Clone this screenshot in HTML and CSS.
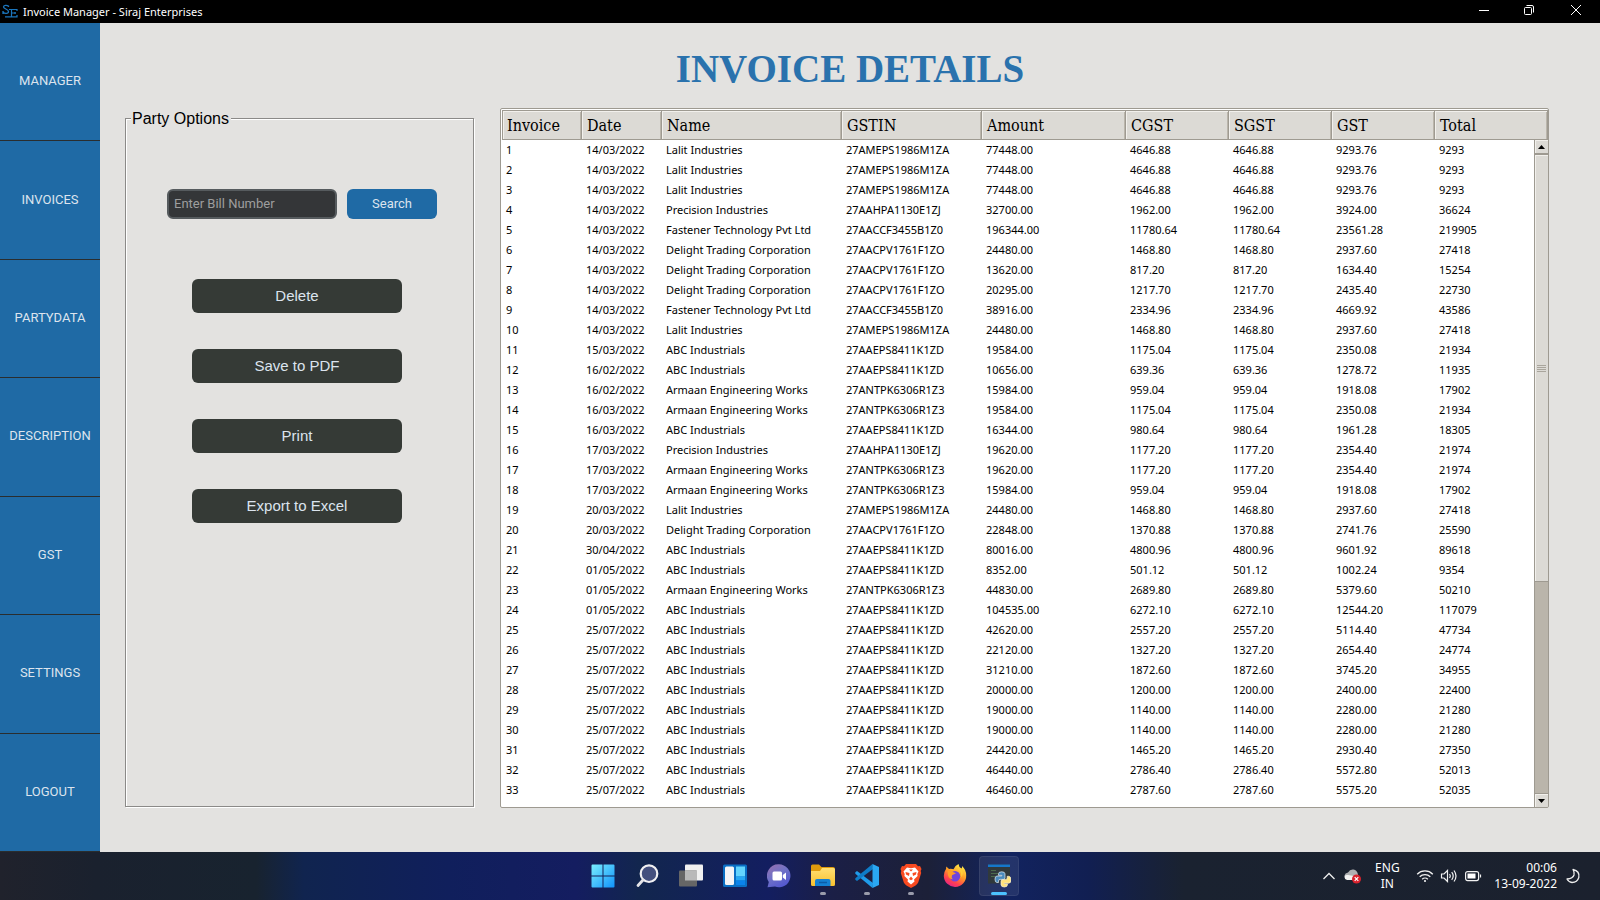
FILE: index.html
```html
<!DOCTYPE html>
<html lang="en">
<head>
<meta charset="utf-8">
<title>Invoice Manager - Siraj Enterprises</title>
<link rel="stylesheet" href="styles.css">
</head>
<body>
<header class="titlebar">
  <svg class="app-logo" viewBox="0 0 16 16" width="16" height="16" fill="none" stroke="#1b76bd" stroke-width="1.3"><path d="M6.500 3V1.500M6.500 2.200C5 .8 1.500 1 1.500 3S6.500 5 6.500 7.500 2.500 10 1 8M1 7v3"/><path d="M7 5.500h8V7M9.500 5.500v7M9.500 9H14M13 8v2M7 12.800h8V11M3 12.800h4" stroke-width="1.200"/></svg>
  <span class="app-title">Invoice Manager - Siraj Enterprises</span>
  <div class="window-controls">
    <button aria-label="Minimize"><svg viewBox="0 0 12 12" width="12" height="12"><path d="M1 6.500h10" stroke="#fff"/></svg></button>
    <button aria-label="Restore"><svg viewBox="0 0 12 12" width="12" height="12" fill="none" stroke="#fff"><rect x="1.500" y="3.500" width="7" height="7" rx="1"/><path d="M3.500 1.500H9a1.500 1.500 0 0 1 1.500 1.500v5.500"/></svg></button>
    <button aria-label="Close"><svg viewBox="0 0 12 12" width="12" height="12"><path d="M1 1l10 10M11 1L1 11" stroke="#fff"/></svg></button>
  </div>
</header>
<div class="workspace">
  <nav class="sidebar">
    <button>MANAGER</button>
    <button>INVOICES</button>
    <button>PARTYDATA</button>
    <button>DESCRIPTION</button>
    <button>GST</button>
    <button>SETTINGS</button>
    <button>LOGOUT</button>
  </nav>
  <main class="content">
    <h1 class="page-title">INVOICE DETAILS</h1>
    <div class="panels">
      <fieldset class="options">
        <legend>Party Options</legend>
        <form class="search">
          <input type="text" class="search-box" placeholder="Enter Bill Number" aria-label="Bill number">
          <button type="button" class="search-button">Search</button>
        </form>
        <div class="actions">
          <button>Delete</button>
          <button>Save to PDF</button>
          <button>Print</button>
          <button>Export to Excel</button>
        </div>
      </fieldset>
      <section class="ledger">
        <table class="invoices">
          <colgroup><col class="w-short"><col class="w-short"><col class="w-name"><col class="w-gstin"><col class="w-amount"><col class="w-tax"><col class="w-tax"><col class="w-tax"><col class="w-total"></colgroup>
          <thead><tr><th>Invoice</th><th>Date</th><th>Name</th><th>GSTIN</th><th>Amount</th><th>CGST</th><th>SGST</th><th>GST</th><th>Total</th></tr></thead>
          <tbody id="rows"></tbody>
        </table>
        <div class="scrollbar">
          <button class="scroll-step" aria-label="Scroll up"><svg viewBox="0 0 7 4" width="7" height="4"><path d="M0 4L3.500 0 7 4z"/></svg></button>
          <div class="scroll-track"><div class="scroll-thumb"><i></i><i></i><i></i><i></i></div></div>
          <button class="scroll-step" aria-label="Scroll down"><svg viewBox="0 0 7 4" width="7" height="4"><path d="M0 0h7L3.500 4z"/></svg></button>
        </div>
      </section>
    </div>
  </main>
</div>
<footer class="taskbar">
  <div class="pinned">
    <button aria-label="Start"><svg viewBox="0 0 24 24" width="24" height="24"><defs><linearGradient id="win" x1="0" y1="0" x2="24" y2="24" gradientUnits="userSpaceOnUse"><stop stop-color="#7cf0ff"/><stop offset="1" stop-color="#0e90fa"/></linearGradient></defs><path fill="url(#win)" d="M.5 1.500Q.5.5 1.500.5H11.500V11.500H.5zM12.500.5H22.500q1 0 1 1V11.500H12.500zM.5 12.500H11.500V23.500H1.500q-1 0-1-1zM12.500 12.500H23.500V22.500q0 1-1 1H12.500z"/></svg></button>
    <button aria-label="Search"><svg viewBox="0 0 24 24" width="24" height="24"><circle cx="14" cy="9.700" r="8.300" fill="#44507e" stroke="#f0f0f2" stroke-width="2.200"/><path d="M8 16l-5 5.500" stroke="#e4e4e8" stroke-width="2.800" stroke-linecap="round"/></svg></button>
    <button aria-label="Task view"><svg viewBox="0 0 24 24" width="24" height="24"><rect x="6" y=".5" width="18" height="16" rx="1" fill="#f1f1f1"/><rect x="0" y="6.500" width="18" height="16" rx="1" fill="#666"/><path d="M6 6.500h12v10H6z" fill="#b9b9b9"/></svg></button>
    <button aria-label="Widgets"><svg viewBox="0 0 24 24" width="24" height="24"><rect y=".5" width="24" height="22.500" rx="1.500" fill="#0a6fc4"/><rect x="2" y="2.500" width="9" height="18.500" rx="1.500" fill="#f4f4f6"/><path d="M13 2.500h9v10h-9z" fill="#63d4fd"/><path d="M13 12.500h9v4h-9z" fill="#26a8f4"/><path d="M13 16.500h9V21h-9z" fill="#0b83ea"/></svg></button>
    <button aria-label="Chat"><svg viewBox="0 0 24 24" width="24" height="24"><defs><linearGradient id="chat" x1="0" y1="0" x2=".6" y2="1"><stop stop-color="#9a6fae"/><stop offset=".5" stop-color="#7072c6"/><stop offset="1" stop-color="#5459d0"/></linearGradient></defs><path d="M12 .3a11.500 11.500 0 1 1-4 22.300L.5 23.200 1.800 18A11.500 11.500 0 0 1 12 .3z" fill="url(#chat)"/><rect x="5.500" y="7.500" width="9.500" height="9" rx="1.500" fill="#fff"/><path d="M15.800 11l3.200-2.500v7.500l-3.200-2.500z" fill="#fff"/></svg></button>
    <button class="running" aria-label="File Explorer"><svg viewBox="0 0 24 24" width="24" height="24"><defs><linearGradient id="fold" x1="0" y1="0" x2="0" y2="1"><stop stop-color="#ffdf73"/><stop offset="1" stop-color="#f8c02e"/></linearGradient></defs><path d="M0 2q0-1.500 1.500-1.500H8l2.500 2.500H22q2 0 2 2v5H0z" fill="#e09b0c"/><path d="M0 7h9l2-3h11.500q1.500 0 1.500 1.500V20.500q0 1.500-1.500 1.500h-21Q0 22 0 20.500z" fill="url(#fold)"/><path d="M4 22v-5q0-2 2-2h11.500q2 0 2 2v5z" fill="#1480d3"/><path d="M8 18.500h8" stroke="#0b5ca8" stroke-width="1.500"/></svg></button>
    <button class="running" aria-label="Visual Studio Code"><svg viewBox="0 0 24 24" width="24" height="24"><path d="M.3 8.300L2 7l16 12-.5 5L.3 9.700z" fill="#1f9bea"/><path d="M.3 15.700L2 17 18 5l-.5-5L.3 14.300z" fill="#0e7cc8"/><path d="M17.500 0L24 3v18l-6.500 3z" fill="#2aa7f2"/></svg></button>
    <button class="running" aria-label="Brave"><svg viewBox="0 0 24 24" width="24" height="24"><path d="M7 0h10l2 2.200 2-.2 1.500 3-.8 2 .5 2-3 9.500q-1 2-3 3.200L12 24l-4.200-2.300q-2-1.200-3-3.200L1.800 9l.5-2-.8-2L3 2l2 .2z" fill="#f84a20"/><path d="M8 3.500l4 .8 4-.8 3.500 4-1.200 2.500.3 2-3.600 3.500.5 2L12 20.500 8.500 17.500l.5-2L5.400 12l.3-2-1.200-2.500z" fill="#fff"/><path d="M6.500 8l4 1-.5 3-3-1.500zM17.500 8l-4 1 .5 3 3-1.500zM12 12.500l2 2.500-2 1.200L10 15zM10 5.500h4l-2 2z" fill="#f84a20"/></svg></button>
    <button aria-label="Firefox"><svg viewBox="0 0 24 24" width="24" height="24"><defs><linearGradient id="fox" x1=".8" y1="0" x2=".25" y2="1"><stop stop-color="#fff24a"/><stop offset=".45" stop-color="#ff9a25"/><stop offset=".75" stop-color="#ff4050"/><stop offset="1" stop-color="#e3208d"/></linearGradient></defs><path d="M15.500 0q.2 3 3 4.500.8-1 .5-2.500 4.200 3.500 4.200 9.500A11.200 11.200 0 1 1 .8 12Q.8 8 3 5l.3-2.500L6 5q2-.5 4.500.2Q12 1.500 15.500 0z" fill="url(#fox)"/><circle cx="12" cy="12.300" r="5.200" fill="#6f45dc"/><path d="M4.500 7q3-.8 6 1.200l2.500 1-4 2q-1 2.500 1 4-4 0-5-4z" fill="#ff9c28"/><path d="M15 5q5 4 2.500 9 4-4 1-8.500z" fill="#ffcf39"/></svg></button>
    <button class="running active" aria-label="Python"><svg viewBox="0 0 24 24" width="24" height="24"><path d="M1 .5h22v19H1z" fill="#30393c"/><path d="M1 .5h22v2.500H1z" fill="#1577cb"/><path d="M4 6.500h5M4 9.500h7M4 12.500h4" stroke="#4c6a4c"/><path d="M11.500 9.800q0-2 3.200-2t3.300 2v4q0 1.600-1.600 1.600h-3.300q-1.600 0-1.600 1.700v1.400H10q-2 0-2-3.300T10 12h4.800v-.7h-3.300z" fill="#4b8bbd" stroke="#e5edf2" stroke-width=".7"/><path d="M20.500 20.500q0 2.500-3.200 2.500T14 20.800v-3.600q0-1.600 1.600-1.600h3q1.600 0 1.600-1.700v-1.600h1.500q2.300 0 2.300 3.600 0 3.300-2.300 3.300h-4.400v.7h3.200z" fill="#ffe37b" stroke="#f5f1dc" stroke-width=".7"/></svg></button>
  </div>
  <div class="tray">
    <button aria-label="Show hidden icons"><svg viewBox="0 0 14 14" width="14" height="14"><path d="M1.500 10L7 4.500l5.500 5.500" fill="none" stroke="#eee" stroke-width="1.300"/></svg></button>
    <button aria-label="OneDrive"><svg viewBox="0 0 18 16" width="18" height="16"><path d="M5 11q-4.500 0-4.500-3.500Q1 5 4 4.500 6 1 9.500 1.500T14 6.500L12 11z" fill="#aeb0b2"/><path d="M3 12q-2.500-.5-2.500-3T4 7l6 1 2 4z" fill="#f2f2f2"/><circle cx="12.500" cy="11" r="4.500" fill="#d9232e"/><path d="M10.700 9.200l3.600 3.600M14.300 9.200l-3.600 3.600" stroke="#fff" stroke-width="1.200"/></svg></button>
    <button class="language">ENG<br>IN</button>
    <button class="status" aria-label="Network, volume and battery">
      <svg viewBox="0 0 18 14" width="18" height="14" fill="none" stroke="#f2f2f2" stroke-width="1.300"><path d="M1.200 5.200a11 11 0 0 1 15.600 0M3.700 7.800a7.500 7.500 0 0 1 10.600 0M6.200 10.200a4 4 0 0 1 5.600 0"/><circle cx="9" cy="12" r="1" fill="#fff" stroke="none"/></svg>
      <svg viewBox="0 0 18 14" width="18" height="14" fill="none" stroke="#f2f2f2" stroke-width="1.200"><path d="M1.500 5H4l3.500-3.500v11L4 9H1.500zM9.500 5q1.500 2 0 4M11.700 3.200q3 3.800 0 7.600M14 1.500q4 5.500 0 11"/></svg>
      <svg viewBox="0 0 18 14" width="18" height="14" fill="none" stroke="#f2f2f2" stroke-width="1.200"><rect x="1.600" y="2.600" width="13" height="9" rx="2"/><path d="M3.500 4.500h8v5h-8z" fill="#fff" stroke="none"/><path d="M16.500 5.500v3"/></svg>
    </button>
    <button class="clock">00:06<br>13-09-2022</button>
    <button aria-label="Focus assist"><svg viewBox="0 0 16 16" width="16" height="16"><path d="M8 1.500q7 1.500 5.800 8-1.500 5-6.800 5-3.500-.5-5-3.500 6-.5 7-4 .6-3-1-5.500z" fill="none" stroke="#eee" stroke-width="1.300" stroke-linejoin="round"/></svg></button>
  </div>
</footer>
<script src="invoices.js"></script>
</body>
</html>
```
FILE: styles.css
```css
* { box-sizing: border-box; }

body {
  margin: 0;
  height: 100vh;
  display: flex;
  flex-direction: column;
  overflow: hidden;
  background: #e3e2e0;
  font-family: "Noto Sans", "Open Sans", sans-serif;
  font-size: 11px;
}

button {
  margin: 0;
  padding: 0;
  border: 0;
  background: none;
  color: inherit;
  font: inherit;
}

svg { display: block; }

/* Title bar */
.titlebar {
  flex: none;
  height: 23px;
  display: flex;
  align-items: center;
  gap: 5px;
  padding-left: 2px;
  background: #000;
  color: #fff;
}
.window-controls { margin-left: auto; align-self: flex-start; display: flex; }
.window-controls button { width: 45px; height: 20px; display: grid; place-items: center; }
.window-controls button:last-child { width: 49px; }

/* Sidebar */
.workspace { flex: 1; min-height: 0; display: flex; }
.sidebar { flex: none; width: 100px; display: flex; flex-direction: column; }
.sidebar button {
  flex: 1;
  padding-bottom: 2px;
  border-bottom: 1px solid #2a2d2e;
  background: #1f6aa5;
  color: #dce4ee;
  font-family: Roboto, sans-serif;
  font-size: 13px;
}

/* Content */
.content {
  flex: 1;
  min-width: 0;
  display: flex;
  flex-direction: column;
  padding: 0 51px 44px 25px;
}
.page-title {
  margin: 0;
  height: 85px;
  padding: 2px 0 0 26px;
  color: #2a72ad;
  font: bold 39px/88px "Liberation Serif", "Times New Roman", serif;
  text-align: center;
}
.panels { flex: 1; min-height: 0; display: flex; gap: 26px; }

.options {
  flex: none;
  width: 349px;
  min-width: 0;
  margin: 0 0 1px;
  padding: 60px 36px 0 41px;
  border: 1px solid #8b8a88;
  box-shadow: 1px 1px #fff, inset 1px 1px #fff;
  font-family: "Liberation Sans", Arial, sans-serif;
}
.options legend {
  margin-left: -36px;
  padding: 1px 2px 0 1px;
  background: #e3e2e0;
  font-size: 16px;
  line-height: 20px;
}
.search { display: flex; gap: 10px; height: 30px; }
.search-box {
  flex: 1;
  min-width: 0;
  padding: 0 5px 2px;
  border: 2px solid #565b5e;
  border-radius: 6px;
  background: #343638;
  color: #dce4ee;
  font: 13px Roboto, sans-serif;
}
.search-box::placeholder { color: #9e9e9e; }
.search-button {
  width: 90px;
  padding-bottom: 2px;
  border-radius: 6px;
  background: #1f6aa5;
  color: #dce4ee;
  font: 13px Roboto, sans-serif;
}
.actions { display: flex; flex-direction: column; gap: 36px; padding: 60px 35px 0 25px; }
.actions button {
  height: 34px;
  padding-bottom: 2px;
  border-radius: 6px;
  background: #353a36;
  color: #dce4ee;
  font-size: 15px;
}

/* Invoice table */
.ledger {
  position: relative;
  flex: 1;
  min-width: 0;
  padding: 1px 0 0 1px;
  border: 1px solid #9e9a91;
  border-radius: 2px;
  background: #fff;
  overflow: hidden;
}
.invoices {
  width: 100%;
  table-layout: fixed;
  border-collapse: separate;
  border-spacing: 0;
  color: #000;
}
.w-short { width: 80px; }
.w-name { width: 180px; }
.w-gstin { width: 140px; }
.w-amount { width: 144px; }
.w-tax { width: 103px; }
.w-total { width: 113px; }
.invoices thead { background: #dcdad5; }
.invoices th {
  height: 30px;
  padding: 1px 4px 0 5px;
  border: 1px solid #9e9a91;
  border-left-width: 0;
  box-shadow: inset 1px 1px #f2f0ec, inset -1px 0 #bab5ab;
  text-align: left;
  font: 16px "DejaVu Serif Condensed", "DejaVu Serif", serif;
  font-stretch: condensed;
}
.invoices th:first-child { border-left-width: 1px; padding-left: 4px; }
.invoices td { height: 20px; padding: 0 4px; line-height: 20px; white-space: nowrap; }

.scrollbar {
  position: absolute;
  top: 31px;
  right: 0;
  bottom: 0;
  width: 14px;
  display: flex;
  flex-direction: column;
  border-left: 1px solid #9e9a91;
  background: #bab5ab;
}
.scroll-step {
  height: 14px;
  display: grid;
  place-items: center;
  border: 0 solid #9e9a91;
  background: #dcdad5;
  box-shadow: inset 1px 1px #f2f0ec;
}
.scroll-step:first-child { border-bottom-width: 1px; }
.scroll-step:last-child { border-top-width: 1px; }
.scroll-track { flex: 1; }
.scroll-thumb {
  height: 67%;
  display: flex;
  flex-direction: column;
  align-items: center;
  justify-content: center;
  gap: 1px;
  border: 1px solid #9e9a91;
  border-width: 1px 0;
  background: #dcdad5;
  box-shadow: inset 1px 1px #f2f0ec;
}
.scroll-thumb i { width: 9px; height: 1px; background: #a9a59c; }

/* Taskbar */
.taskbar {
  flex: none;
  height: 48px;
  display: grid;
  grid-template-columns: 1fr auto 1fr;
  align-items: center;
  background: linear-gradient(90deg, #20222c 0, #1a212e 6%, #18232f 16%, #10244f 19%, #101f5c 28%, #141d60 36%, #12264e 40%, #131e60 48%, #1b1f46 52%, #1c2038 58%, #12235f 63%, #111f52 68%, #1a2230 74%, #1b212e 100%);
  color: #fff;
}
.pinned { grid-column: 2; display: flex; gap: 4px; padding-left: 2px; }
.pinned button {
  position: relative;
  width: 40px;
  height: 40px;
  display: grid;
  place-items: center;
  border-radius: 4px;
}
.pinned .active { background: #ffffff14; box-shadow: inset 0 0 0 1px #ffffff12; }
.pinned .running::after {
  content: "";
  position: absolute;
  left: 17px;
  bottom: 1px;
  width: 6px;
  height: 3px;
  border-radius: 2px;
  background: #9a9cab;
}
.pinned .active::after { left: 12px; width: 16px; background: #4cc2ff; }

.tray {
  display: flex;
  align-items: center;
  justify-content: flex-end;
  padding-right: 19px;
  font-size: 12px;
  line-height: 16px;
}
.tray .language { width: 26px; margin: 0 16px 0 12px; text-align: center; }
.tray > button:first-child { margin-right: 8px; }
.tray .status { display: flex; gap: 6px; }
.tray .clock { margin: 0 8px 0 12px; text-align: right; }
```
FILE: invoices.js
```js
const parties = {
  L: ["Lalit Industries", "27AMEPS1986M1ZA"],
  P: ["Precision Industries", "27AAHPA1130E1ZJ"],
  F: ["Fastener Technology Pvt Ltd", "27AACCF3455B1Z0"],
  D: ["Delight Trading Corporation", "27AACPV1761F1ZO"],
  A: ["ABC Industrials", "27AAEPS8411K1ZD"],
  E: ["Armaan Engineering Works", "27ANTPK6306R1Z3"]
};

// date, party, amount, CGST (equal to SGST), GST, total
const invoices = `14/03/2022 L 77448.00 4646.88 9293.76 9293
14/03/2022 L 77448.00 4646.88 9293.76 9293
14/03/2022 L 77448.00 4646.88 9293.76 9293
14/03/2022 P 32700.00 1962.00 3924.00 36624
14/03/2022 F 196344.00 11780.64 23561.28 219905
14/03/2022 D 24480.00 1468.80 2937.60 27418
14/03/2022 D 13620.00 817.20 1634.40 15254
14/03/2022 D 20295.00 1217.70 2435.40 22730
14/03/2022 F 38916.00 2334.96 4669.92 43586
14/03/2022 L 24480.00 1468.80 2937.60 27418
15/03/2022 A 19584.00 1175.04 2350.08 21934
16/02/2022 A 10656.00 639.36 1278.72 11935
16/02/2022 E 15984.00 959.04 1918.08 17902
16/03/2022 E 19584.00 1175.04 2350.08 21934
16/03/2022 A 16344.00 980.64 1961.28 18305
17/03/2022 P 19620.00 1177.20 2354.40 21974
17/03/2022 E 19620.00 1177.20 2354.40 21974
17/03/2022 E 15984.00 959.04 1918.08 17902
20/03/2022 L 24480.00 1468.80 2937.60 27418
20/03/2022 D 22848.00 1370.88 2741.76 25590
30/04/2022 A 80016.00 4800.96 9601.92 89618
01/05/2022 A 8352.00 501.12 1002.24 9354
01/05/2022 E 44830.00 2689.80 5379.60 50210
01/05/2022 A 104535.00 6272.10 12544.20 117079
25/07/2022 A 42620.00 2557.20 5114.40 47734
25/07/2022 A 22120.00 1327.20 2654.40 24774
25/07/2022 A 31210.00 1872.60 3745.20 34955
25/07/2022 A 20000.00 1200.00 2400.00 22400
25/07/2022 A 19000.00 1140.00 2280.00 21280
25/07/2022 A 19000.00 1140.00 2280.00 21280
25/07/2022 A 24420.00 1465.20 2930.40 27350
25/07/2022 A 46440.00 2786.40 5572.80 52013
25/07/2022 A 46460.00 2787.60 5575.20 52035`;

const body = document.getElementById("rows");
invoices.split("\n").forEach((line, index) => {
  const [date, party, amount, tax, gst, total] = line.split(" ");
  const row = body.insertRow();
  for (const value of [index + 1, date, ...parties[party], amount, tax, tax, gst, total]) {
    row.insertCell().textContent = value;
  }
});
```
